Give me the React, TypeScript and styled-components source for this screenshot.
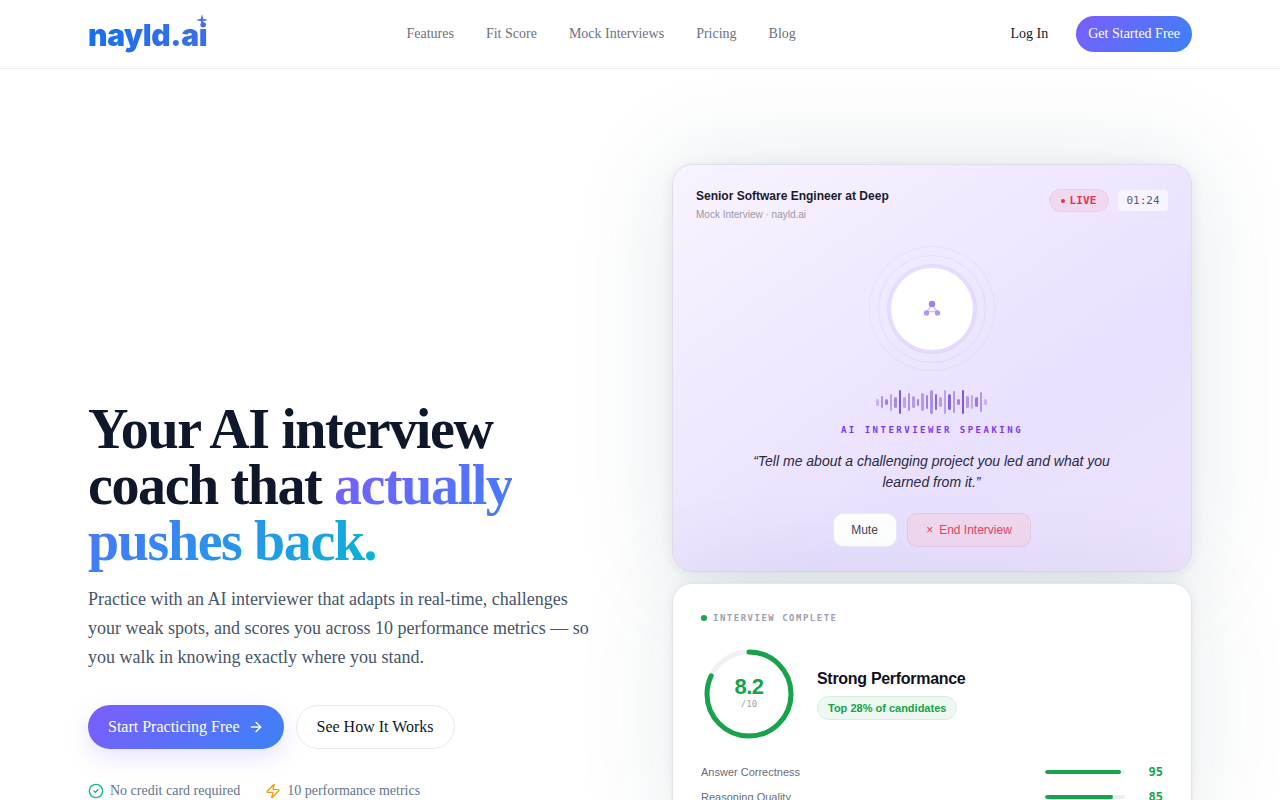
import React from "react";
import styled, { createGlobalStyle } from "styled-components";
import { ArrowRight, CircleCheck, Zap } from "lucide-react";

const Global = createGlobalStyle`
  html, body { margin: 0; padding: 0; height: 100%; overflow: hidden; background: #fff; }
  * { box-sizing: border-box; }
  body { font-family: "Liberation Serif", serif; }
`;
const Page = styled.div`
  height: 800px; overflow: hidden; position: relative;
  background: #fff;
`;
const Nav = styled.header`
  height: 69px; border-bottom: 1px solid #eeeef2; background: #fff; position: relative; z-index: 1;
  display: grid; grid-template-columns: 318.5px auto 1fr; align-items: center; padding: 0 88px;
`;
const Logo = styled.div`
  position: relative; justify-self: start; font-family: Inter, sans-serif; font-weight: 900; font-size: 30px;
  letter-spacing: -0.35px; line-height: 36px; margin-top: 1px;
  background: linear-gradient(90deg, #1570ef, #3b6fe8); -webkit-background-clip: text; background-clip: text; color: transparent;
`;
const Star = styled.svg`position: absolute; right: -1px; top: -3px;`;
const Links = styled.nav`display: flex; gap: 32px;`;
const NavLink = styled.a`font-size: 14px; color: #6b7280; line-height: 20px;`;
const NavRight = styled.div`justify-self: end; display: flex; align-items: center; gap: 28px;`;
const Login = styled.a`font-size: 14px; color: #111827;`;
const Cta = styled.a`
  height: 36px; padding: 0 12px; border-radius: 18px; display: flex; align-items: center; color: #fff; font-size: 14px;
  background: linear-gradient(135deg, #7c5cfc, #3b82f6);
`;
const Hero = styled.main`display: grid; grid-template-columns: 520px 520px; justify-content: space-between; padding: 0 88px;`;
const Left = styled.section`padding-top: 332px;`;
const Title = styled.h1`
  margin: 0; font-size: 56px; line-height: 56px; font-weight: 700; color: #0f172a; letter-spacing: -1.4px;
`;
const Grad = styled.span`
  background: linear-gradient(135deg, #7c5cfc, #3b82f6 50%, #06b6d4); -webkit-background-clip: text; background-clip: text; color: transparent;
`;
const Lead = styled.p`margin: 16px 0 0; width: 510px; font-size: 18px; line-height: 29px; color: #475569;`;
const Actions = styled.div`display: flex; gap: 12px; margin-top: 33px;`;
const Primary = styled.a`
  height: 44px; padding: 0 20px; border-radius: 22px; display: flex; align-items: center; gap: 8px; color: #fff; font-size: 16px;
  background: linear-gradient(135deg, #7c5cfc, #3b82f6); box-shadow: 0 8px 24px rgba(124,92,252,0.18);
`;
const Secondary = styled.a`
  height: 44px; padding: 0 20px; border-radius: 22px; display: flex; align-items: center; color: #111827; font-size: 16px;
  border: 1px solid #e8e8ee; background: #fff;
`;
const Notes = styled.div`display: flex; gap: 25px; margin-top: 34px;`;
const Note = styled.span`display: flex; align-items: center; gap: 6px; font-size: 14px; color: #64748b;`;
const Right = styled.section`padding-top: 95px; display: flex; flex-direction: column; gap: 11px;`;
const LiveCard = styled.div`
  height: 408px; border-radius: 20px; border: 1px solid #e0dcea; padding: 24px 24px 24px 23px;
  background: linear-gradient(145deg, #f8f3ff 0%, #eee6fe 45%, #e8e0ff 65%, #ede3fd 100%);
  box-shadow: 0 0 100px rgba(30,70,90,0.13), 0 2px 14px rgba(30,70,90,0.09);
  display: flex; flex-direction: column; align-items: center;
`;
const CardHead = styled.div`width: 100%; display: flex; justify-content: space-between; align-items: flex-start;`;
const HeadText = styled.div`display: flex; flex-direction: column; gap: 5px;`;
const JobTitle = styled.div`font: 700 12px/14px "Liberation Sans", sans-serif; color: #1a1a2e;`;
const JobSub = styled.div`font: 400 10px/14px "Liberation Sans", sans-serif; color: #9a97a8;`;
const Status = styled.div`display: flex; gap: 9px; align-items: center; margin-right: -1px;`;
const LiveTag = styled.div`
  width: 60px; height: 23px; border-radius: 12px; background: #f0d8ee; border: 1px solid #ead0e6; color: #e5344b;
  font: 700 11px "DejaVu Sans Mono", monospace; letter-spacing: 0.15px; display: flex; align-items: center; justify-content: center; gap: 4px;
`;
const Dot = styled.i<{ $c: string; $s: number }>`
  display: block; width: ${p => p.$s}px; height: ${p => p.$s}px; border-radius: 50%; background: ${p => p.$c};
`;
const Timer = styled.div`
  width: 50px; height: 21px; border-radius: 4px; background: #f7f4ff; color: #5b5b70;
  font: 400 11px "DejaVu Sans Mono", monospace; display: flex; align-items: center; justify-content: center;
`;
const Orb = styled.div`
  width: 126px; height: 126px; margin-top: 24px; border-radius: 50%; border: 1px solid rgba(124,92,252,0.06);
  display: flex; align-items: center; justify-content: center;
`;
const OrbMid = styled.div`
  width: 108px; height: 108px; border-radius: 50%; border: 1px solid rgba(124,92,252,0.09);
  display: flex; align-items: center; justify-content: center;
`;
const OrbCore = styled.div`
  width: 90px; height: 90px; border-radius: 50%; border: 1px solid rgba(124,92,252,0.13);
  display: flex; align-items: center; justify-content: center;
`;
const OrbFace = styled.div`
  width: 82px; height: 82px; border-radius: 50%; background: #fff; box-shadow: 0 0 0 3px rgba(124,92,252,0.07);
  display: flex; align-items: center; justify-content: center;
`;
const Wave = styled.div`display: flex; align-items: center; justify-content: center; gap: 2px; height: 26px; margin-top: 18px;`;
const Bar = styled.i<{ $h: number; $o: number }>`
  display: block; width: 2.5px; height: ${p => p.$h}px; border-radius: 1.5px; background: rgba(112,62,214,${p => p.$o});
`;
const Speaking = styled.div`
  margin-top: 8px; margin-left: 1px; font: 700 9px/14px "DejaVu Sans Mono", monospace; letter-spacing: 2.5px; color: #7c3aed;
`;
const Quote = styled.p`
  margin: 14px 0 0; width: 380px; text-align: center; font: italic 400 14px/21px "Liberation Sans", sans-serif; color: #2a2a3e;
`;
const Btns = styled.div`display: flex; gap: 10px; margin-top: 20px;`;
const Mute = styled.button`
  width: 64px; height: 34px; border-radius: 10px; border: 1px solid #eeeaf8; background: #fff; color: #44445a;
  font: 400 12px "Liberation Sans", sans-serif; padding: 0;
`;
const End = styled.button`
  width: 124px; height: 34px; border-radius: 10px; border: 1px solid #e8c8e0; background: #f0d8f0; color: #e5455f;
  font: 400 12px "Liberation Sans", sans-serif; padding: 0 0 0 1px;
  display: flex; align-items: center; justify-content: center; gap: 6px;
`;
const ScoreCard = styled.div`
  border-radius: 20px; border: 1px solid #e3e6ec; background: #fff; padding: 27px 28px 28px;
  box-shadow: 0 0 100px rgba(30,70,90,0.1), 0 0 8px rgba(30,70,90,0.08);
`;
const DoneRow = styled.div`display: flex; align-items: center; gap: 6px; height: 14px;`;
const DoneLabel = styled.span`font: 700 9px "DejaVu Sans Mono", monospace; letter-spacing: 1.5px; color: #a0a0ae;`;
const ScoreRow = styled.div`display: flex; align-items: center; gap: 25px; margin-top: 24px; padding-left: 3px;`;
const Gauge = styled.div`position: relative; width: 88px; height: 90px; flex: none;`;
const GaugeText = styled.div`
  position: absolute; inset: 0 0 3px 2px; display: flex; flex-direction: column; align-items: center; justify-content: center;
`;
const GaugeNum = styled.div`font: 700 22px/23px "Liberation Sans", sans-serif; color: #16a34a; letter-spacing: -0.5px;`;
const GaugeMax = styled.div`font: 400 9px/12px "DejaVu Sans Mono", monospace; color: #a3a3ad;`;
const ScoreInfo = styled.div`display: flex; flex-direction: column; gap: 6px; align-items: flex-start;`;
const ScoreTitle = styled.div`font: 700 16px/22px "Liberation Sans", sans-serif; color: #111122; letter-spacing: -0.3px;`;
const Badge = styled.div`
  height: 24px; padding: 0 10px; border-radius: 12px; background: #ecf8f0; border: 1px solid #d3eedd; color: #16a34a;
  font: 700 11px "Liberation Sans", sans-serif; display: flex; align-items: center;
`;
const Metrics = styled.div`margin-top: 26px; display: flex; flex-direction: column; gap: 11px;`;
const Metric = styled.div`display: flex; align-items: center; height: 14px;`;
const MetricName = styled.span`flex: 1; font: 400 11px "Liberation Sans", sans-serif; color: #6b6b7b;`;
const Track = styled.div`width: 80px; height: 4px; border-radius: 2px; background: #eeeef2; overflow: hidden;`;
const Fill = styled.div`height: 100%; border-radius: 2px; background: #16a34a;`;
const MetricVal = styled.span`width: 38px; text-align: right; font: 700 12px "DejaVu Sans Mono", monospace; color: #16a34a;`;

const bars: [number, number][] = [
  [7,.3],[12,.5],[6,.6],[17,.4],[11,.55],[24,.85],[11,.4],[18,.5],[12,.45],[7,.6],[18,.45],[14,.6],
  [24,.5],[16,.75],[10,.45],[24,.4],[16,.8],[22,.45],[6,.6],[24,.85],[12,.45],[14,.35],[10,.65],[20,.45],[6,.3]
];

export default function App() {
  return (
    <Page>
      <Global />
      <Nav>
        <Logo>
          nayld.ai
          <Star width="12" height="12" viewBox="0 0 12 12"><path d="M6 0 L7.2 4.8 L12 6 L7.2 7.2 L6 12 L4.8 7.2 L0 6 L4.8 4.8 Z" fill="#5b6ae8" /></Star>
        </Logo>
        <Links>
          <NavLink>Features</NavLink><NavLink>Fit Score</NavLink><NavLink>Mock Interviews</NavLink><NavLink>Pricing</NavLink><NavLink>Blog</NavLink>
        </Links>
        <NavRight><Login>Log In</Login><Cta>Get Started Free</Cta></NavRight>
      </Nav>
      <Hero>
        <Left>
          <Title>Your AI interview<br />coach that <Grad>actually<br />pushes back.</Grad></Title>
          <Lead>Practice with an AI interviewer that adapts in real-time, challenges your weak spots, and scores you across 10 performance metrics — so you walk in knowing exactly where you stand.</Lead>
          <Actions>
            <Primary>Start Practicing Free <ArrowRight size={16} /></Primary>
            <Secondary>See How It Works</Secondary>
          </Actions>
          <Notes>
            <Note><CircleCheck size={16} color="#10b981" />No credit card required</Note>
            <Note><Zap size={16} color="#f59e0b" />10 performance metrics</Note>
          </Notes>
        </Left>
        <Right>
          <LiveCard>
            <CardHead>
              <HeadText><JobTitle>Senior Software Engineer at Deep</JobTitle><JobSub>Mock Interview · nayld.ai</JobSub></HeadText>
              <Status>
                <LiveTag><Dot $c="#e5344b" $s={4} />LIVE</LiveTag>
                <Timer>01:24</Timer>
              </Status>
            </CardHead>
            <Orb><OrbMid><OrbCore><OrbFace>
              <svg width="20" height="20" viewBox="0 0 20 20">
                <path d="M10 6 L5 12.5 M10 6 L15 12.5 M5 12.5 H15" stroke="#d8c8f8" strokeWidth="1.5" fill="none" />
                <circle cx="10" cy="5" r="3.2" fill="#a17ff0" /><circle cx="4.5" cy="14" r="2.7" fill="#b596f2" /><circle cx="15.5" cy="14" r="2.7" fill="#b596f2" />
              </svg>
            </OrbFace></OrbCore></OrbMid></Orb>
            <Wave>{bars.map(([h, o], i) => <Bar key={i} $h={h} $o={o} />)}</Wave>
            <Speaking>AI INTERVIEWER SPEAKING</Speaking>
            <Quote>“Tell me about a challenging project you led and what you learned from it.”</Quote>
            <Btns><Mute>Mute</Mute><End><span>×</span>End Interview</End></Btns>
          </LiveCard>
          <ScoreCard>
            <DoneRow><Dot $c="#16a34a" $s={6} /><DoneLabel>INTERVIEW COMPLETE</DoneLabel></DoneRow>
            <ScoreRow>
              <Gauge>
                <svg width="90" height="90" viewBox="0 0 90 90">
                  <circle cx="45" cy="45" r="42" fill="none" stroke="#f1f1f3" strokeWidth="5" />
                  <circle cx="45" cy="45" r="42" fill="none" stroke="#16a34a" strokeWidth="5" strokeLinecap="round"
                    strokeDasharray={`${2 * Math.PI * 42 * 0.82} ${2 * Math.PI * 42}`} transform="rotate(-90 45 45)" />
                </svg>
                <GaugeText><GaugeNum>8.2</GaugeNum><GaugeMax>/10</GaugeMax></GaugeText>
              </Gauge>
              <ScoreInfo><ScoreTitle>Strong Performance</ScoreTitle><Badge>Top 28% of candidates</Badge></ScoreInfo>
            </ScoreRow>
            <Metrics>
              <Metric><MetricName>Answer Correctness</MetricName><Track><Fill style={{ width: "95%" }} /></Track><MetricVal>95</MetricVal></Metric>
              <Metric><MetricName>Reasoning Quality</MetricName><Track><Fill style={{ width: "85%" }} /></Track><MetricVal>85</MetricVal></Metric>
            </Metrics>
          </ScoreCard>
        </Right>
      </Hero>
    </Page>
  );
}
